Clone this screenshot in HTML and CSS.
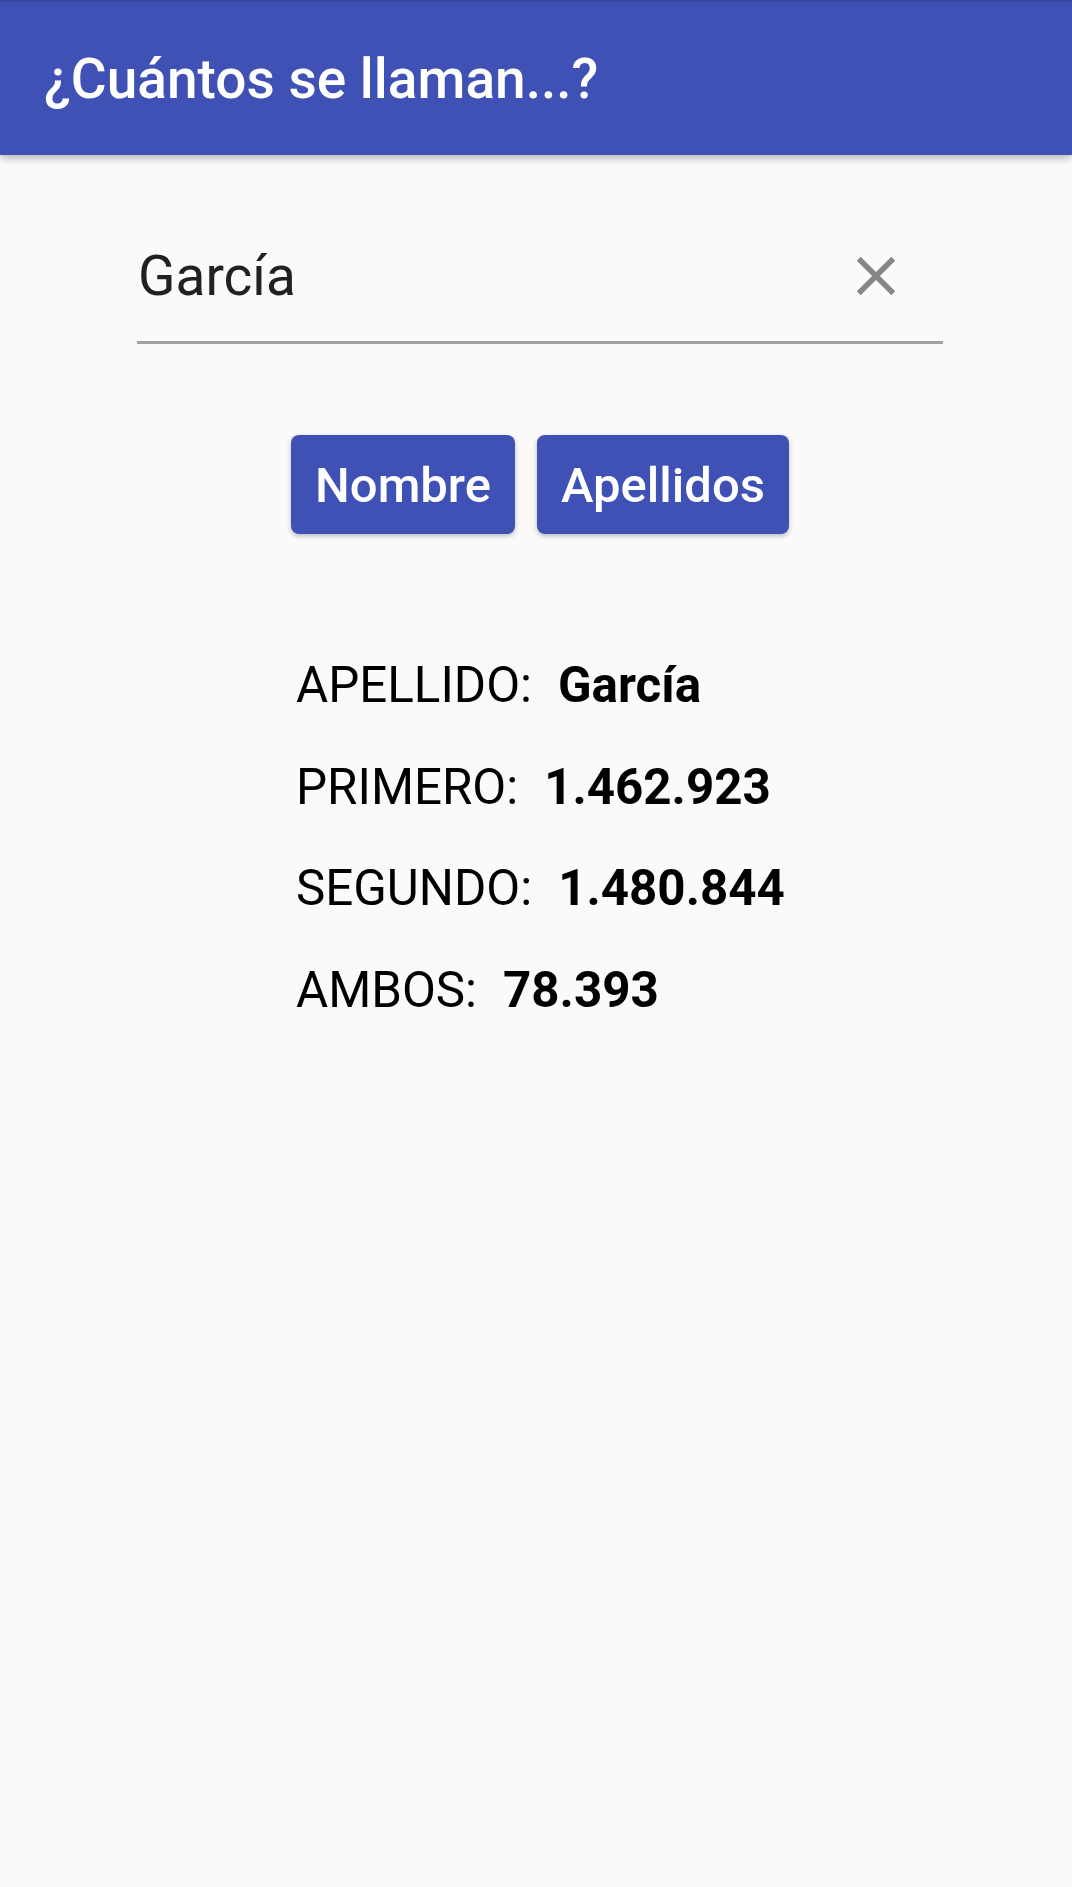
FILE: index.html
```html
<!DOCTYPE html>
<html lang="es">
<head>
    <meta charset="UTF-8">
    <meta name="viewport" content="width=device-width, initial-scale=1.0">
    <title>¿Cuántos se llaman...?</title>
    <link rel="stylesheet" href="styles.css">
</head>
<body>
    <header class="toolbar">
        <h1>¿Cuántos se llaman...?</h1>
    </header>
    <main>
        <div class="search-field">
            <span class="search-text">García</span>
            <button class="clear-btn" aria-label="Borrar">
                <svg viewBox="0 0 24 24" width="66" height="66">
                    <path d="M19 6.41L17.59 5 12 10.59 6.41 5 5 6.41 10.59 12 5 17.59 6.41 19 12 13.41 17.59 19 19 17.59 13.41 12z" fill="#878787"/>
                </svg>
            </button>
        </div>

        <div class="actions">
            <button class="btn">Nombre</button>
            <button class="btn">Apellidos</button>
        </div>

        <ul class="results">
            <li><span class="label">APELLIDO:</span><span class="value">García</span></li>
            <li><span class="label">PRIMERO:</span><span class="value">1.462.923</span></li>
            <li><span class="label">SEGUNDO:</span><span class="value">1.480.844</span></li>
            <li><span class="label">AMBOS:</span><span class="value">78.393</span></li>
        </ul>
    </main>
</body>
</html>
```

FILE: styles.css
```css
body {
    font-family: Roboto, 'Noto Sans', sans-serif;
    margin: 0;
    padding: 0;
    background-color: #fafafa;
    min-height: 100vh;
}

.toolbar {
    background-color: #3f51b5;
    border-top: 2px solid #3546a3;
    height: 153px;
    display: flex;
    align-items: center;
    padding: 0 44px;
    box-shadow: 0 3px 8px rgba(0, 0, 0, 0.28);
    position: relative;
}

.toolbar h1 {
    margin: 0;
    color: #fff;
    font-size: 55px;
    font-weight: 500;
    letter-spacing: 0;
}

main {
    display: flex;
    flex-direction: column;
}

.search-field {
    margin: 88px 0 0 137px;
    width: 806px;
    display: flex;
    align-items: center;
    justify-content: space-between;
    padding-bottom: 32px;
    border-bottom: 3px solid #a0a0a0;
}

.search-text {
    font-size: 55px;
    line-height: 66px;
    color: #212121;
    padding-left: 1px;
}

.clear-btn {
    background: none;
    border: none;
    padding: 0;
    margin-right: 34px;
    display: flex;
    cursor: pointer;
}

.actions {
    display: flex;
    justify-content: center;
    gap: 22px;
    margin-top: 91px;
    padding-left: 8px;
}

.btn {
    font-family: Roboto, 'Noto Sans', sans-serif;
    background-color: #3f51b5;
    color: #fff;
    border: none;
    border-radius: 8px;
    font-size: 49px;
    font-weight: 500;
    line-height: 59px;
    padding: 21px 24px 19px;
    box-shadow: 0 2px 5px rgba(0, 0, 0, 0.25);
    cursor: pointer;
}

.results {
    list-style: none;
    margin: 101px 0 0 296px;
    padding: 0;
}

.results li {
    font-size: 49.3px;
    line-height: 101.5px;
    color: #000;
}

.results .value {
    font-weight: 700;
    margin-left: 26px;
}
```
